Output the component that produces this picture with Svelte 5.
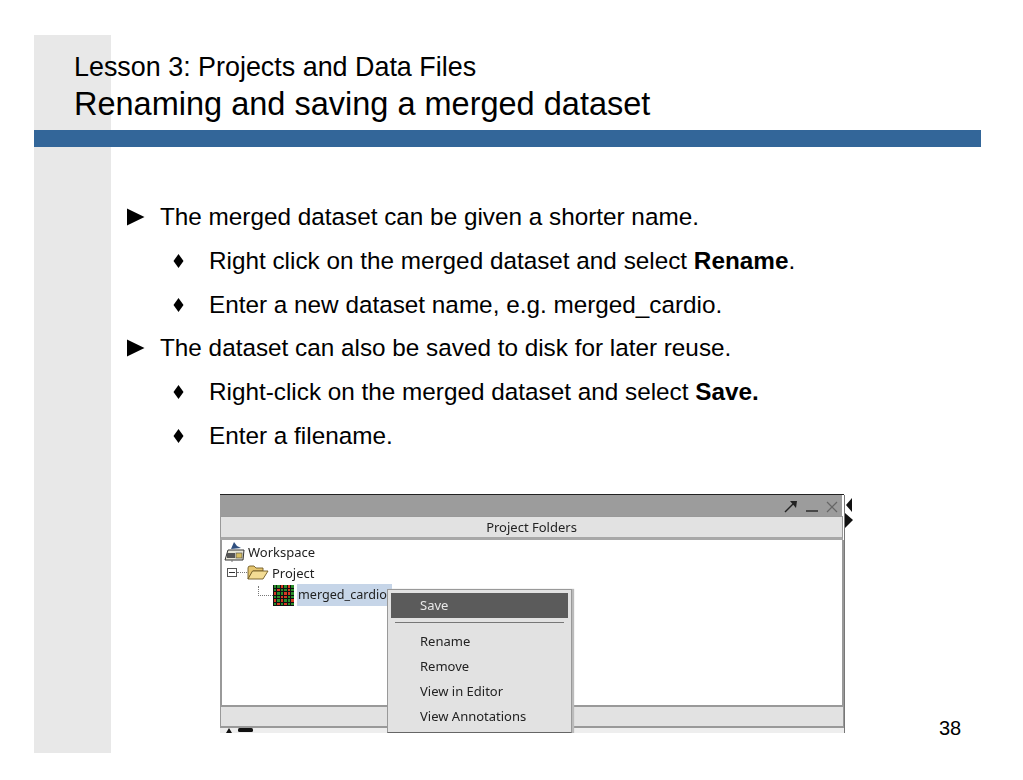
<script>
	const outline = [
		{ text: 'The merged dataset can be given a shorter name.', level: 1 },
		{ text: 'Right click on the merged dataset and select ', strong: 'Rename', after: '.', level: 2 },
		{ text: 'Enter a new dataset name, e.g. merged_cardio.', level: 2 },
		{ text: 'The dataset can also be saved to disk for later reuse.', level: 1 },
		{ text: 'Right-click on the merged dataset and select ', strong: 'Save.', level: 2 },
		{ text: 'Enter a filename.', level: 2 }
	];

	const menu_items = ['Rename', 'Remove', 'View in Editor', 'View Annotations'];

	// red/green cells of the dataset heatmap icon
	const heat = [
		'ggrgrg',
		'grggrg',
		'rggrrg',
		'ggrrgg',
		'rgrggr',
		'grgrgg'
	];
</script>

<div class="slide">
	<header class="title">
		<div class="lesson">Lesson 3: Projects and Data Files</div>
		<h1>Renaming and saving a merged dataset</h1>
	</header>
	<div class="rule"></div>

	<ul class="outline">
		{#each outline as item}
			<li class={item.level === 1 ? 'top' : 'sub'}>
				<span class="mark">
					{#if item.level === 1}
						<svg width="18" height="18" viewBox="0 0 18 18"><path d="M0 0.5 L17.5 9 L0 17.5 Z" fill="#000" /></svg>
					{:else}
						<svg width="11" height="14" viewBox="0 0 11 14"><path d="M5.5 0 L10.5 7 L5.5 14 L0.5 7 Z" fill="#000" /></svg>
					{/if}
				</span>
				<span>{item.text}{#if item.strong}<b>{item.strong}</b>{/if}{item.after ?? ''}</span>
			</li>
		{/each}
	</ul>

	<div class="bottom">
		<div class="shot">
			<div class="window">
				<div class="caption">
					<svg width="60" height="21" viewBox="0 0 60 21">
						<path d="M3 17 L12 8" stroke="#222" stroke-width="1.4" fill="none" />
						<path d="M8 6 L15 6 L14 13 Z" fill="#222" />
						<path d="M24 16 H36" stroke="#333" stroke-width="1.6" />
						<path d="M45 7 L55 17 M55 7 L45 17" stroke="#666" stroke-width="1.2" />
					</svg>
				</div>
				<div class="folders">Project Folders</div>
				<div class="tree">
					<div class="node">
						<svg width="21" height="20" viewBox="0 0 21 20">
							<path d="M10 0 L13 4 L17 6 L7 7 Z" fill="#2f4f7f" />
							<path d="M4 8 H20 L19 18 H1 Z" fill="#e8e6d8" stroke="#333" />
							<rect x="3" y="11" width="8" height="5" fill="#555" />
							<rect x="12" y="11" width="6" height="5" fill="#d8bf62" stroke="#444" stroke-width=".6" />
							<path d="M8 18 V20" stroke="#777" />
						</svg>
						<span>Workspace</span>
					</div>
					<div class="node project">
						<span class="toggle"></span>
						<span class="dots"></span>
						<svg width="22" height="16" viewBox="0 0 22 16">
							<path d="M1 14 V3 Q1 1 3 1 H7 L9 3 H16 V6 H6 L1 14 Z" fill="#e6c670" stroke="#6f5a24" stroke-width=".9" />
							<path d="M1 14 L5.5 6 H21 L16 14 Z" fill="#f3dc94" stroke="#6f5a24" stroke-width=".9" />
						</svg>
						<span>Project</span>
					</div>
					<div class="node dataset">
						<span class="branch"></span>
						<div class="heat">
							{#each heat as row}
								{#each row.split('') as c}
									<i class={c}></i>
								{/each}
							{/each}
						</div>
						<span class="selected">merged_cardio</span>
					</div>
				</div>
				<div class="status"></div>
				<div class="cut">
					<svg width="34" height="5" viewBox="0 0 34 5">
						<path d="M6 5 L9 0 L12 5 Z" fill="#111" />
						<rect x="18" y="0" width="15" height="4" rx="1.5" fill="#111" />
					</svg>
				</div>

				<div class="menu">
					<div class="item active">Save</div>
					<div class="sep"></div>
					{#each menu_items as label}
						<div class="item">{label}</div>
					{/each}
				</div>
			</div>
			<div class="edge">
				<svg width="9" height="36" viewBox="0 0 9 36">
					<path d="M7 3 L1 10 L7 17 Z" fill="#111" />
					<path d="M0 18 L8 25 L0 33 Z" fill="#111" />
				</svg>
			</div>
		</div>
		<div class="page">38</div>
	</div>
</div>

<style>
	:global(body) {
		background: #fff;
		font-family: 'Liberation Sans', Arial, sans-serif;
		color: #000;
	}

	.slide {
		box-sizing: border-box;
		width: 947px;
		height: 718px;
		margin: 35px 0 0 34px;
		background: linear-gradient(to right, #e8e8e8 77px, #fff 77px);
		display: flex;
		flex-direction: column;
	}

	.title {
		padding: 18px 0 0 40px;
		height: 95px;
		box-sizing: border-box;
	}

	.lesson {
		font-size: 26.9px;
		line-height: 28px;
		white-space: nowrap;
	}

	h1 {
		margin: 5px 0 0;
		font-weight: normal;
		font-size: 32.5px;
		line-height: 36px;
		white-space: nowrap;
	}

	.rule {
		height: 17px;
		background: #336699;
	}

	.outline {
		list-style: none;
		margin: 0;
		padding: 57px 0 0 0;
		font-size: 24.3px;
		height: 347px;
		box-sizing: border-box;
	}

	.outline li {
		display: flex;
		height: 43.8px;
		line-height: 26px;
	}

	.top {
		padding-left: 93px;
	}

	.sub {
		padding-left: 139px;
	}

	.mark {
		flex: none;
		display: flex;
		align-items: center;
		height: 26px;
	}

	.top .mark {
		width: 33px;
	}

	.sub .mark {
		width: 36px;
	}

	.bottom {
		display: flex;
		padding-left: 186px;
		flex: 1;
	}

	.shot {
		display: flex;
		height: 239px;
		width: 633px;
	}

	.window {
		position: relative;
		width: 625px;
		height: 239px;
		box-sizing: border-box;
		display: flex;
		flex-direction: column;
		font-family: 'Noto Sans', sans-serif;
		font-size: 13px;
		color: #222;
		overflow: hidden;
		border-top: 1px solid #222;
		filter: blur(0.4px);
	}

	.caption {
		height: 21px;
		background: #9c9c9c;
		display: flex;
		justify-content: flex-end;
		margin-right: 2px;
	}

	.folders {
		height: 24px;
		box-sizing: border-box;
		line-height: 20px;
		text-align: center;
		background: #e2e2e2;
		border: 1px solid #999;
		border-bottom: 3px solid #a8a8a8;
		margin-right: 1px;
	}

	.tree {
		flex: 1;
		padding: 1px 0 0 2px;
		border-left: 2px solid #999;
		border-right: 2px solid #999;
		background: #fff;
	}

	.node {
		display: flex;
		align-items: center;
		height: 21px;
	}

	.node svg {
		flex: none;
	}

	.node span:last-child {
		margin-left: 3px;
	}

	.project {
		padding-left: 3px;
	}

	.toggle {
		box-sizing: border-box;
		width: 10px;
		height: 9px;
		border: 1px solid #555;
		background: linear-gradient(#333, #333) center / 6px 1px no-repeat #fff;
	}

	.dots {
		width: 10px;
		border-top: 1px dotted #777;
	}

	.dataset {
		padding-left: 34px;
		height: 22px;
		margin-top: 1px;
	}

	.branch {
		width: 15px;
		height: 10px;
		margin-top: -8px;
		box-sizing: border-box;
		border-left: 1px dotted #777;
		border-bottom: 1px dotted #777;
	}

	.heat {
		display: grid;
		grid-template-columns: repeat(6, 3.5px);
		grid-auto-rows: 3.5px;
		width: 21px;
		height: 21px;
		background: #111;
		flex: none;
	}

	.heat i {
		margin: 0.5px;
	}

	.heat .g {
		background: #2a8f2a;
	}

	.heat .r {
		background: #d83a22;
	}

	.dataset .selected {
		margin-left: 3px;
		background: #c6d5e8;
		font-size: 12.6px;
		line-height: 22px;
		padding: 0 1px;
		width: 95px;
		box-sizing: border-box;
		flex: none;
		white-space: nowrap;
		overflow: hidden;
	}

	.status {
		height: 23px;
		flex: none;
		box-sizing: border-box;
		background: #e2e2e2;
		border: 2px solid #999;
		border-width: 2px 1px;
	}

	.cut {
		height: 5px;
		flex: none;
		background: #eee;
		line-height: 0;
	}

	.menu {
		position: absolute;
		left: 167px;
		top: 94px;
		width: 185px;
		height: 144px;
		box-sizing: border-box;
		background: #e2e2e2;
		border: 1px solid #999;
		border-bottom-color: #666;
		box-shadow: 2px 0 1px #bbb;
		padding: 3px;
	}

	.item {
		height: 25px;
		line-height: 25px;
		padding-left: 29px;
	}

	.active {
		background: #5b5b5b;
		color: #e8e8e8;
		margin-bottom: 4px;
	}

	.sep {
		height: 1px;
		background: #777;
		margin: 0 4px 6px;
	}

	.edge {
		width: 8px;
		border-left: 1px solid #777;
		line-height: 0;
		margin-top: 1px;
	}

	.page {
		font-size: 20px;
		margin: 224px 0 0 86px;
		line-height: 20px;
	}
</style>
